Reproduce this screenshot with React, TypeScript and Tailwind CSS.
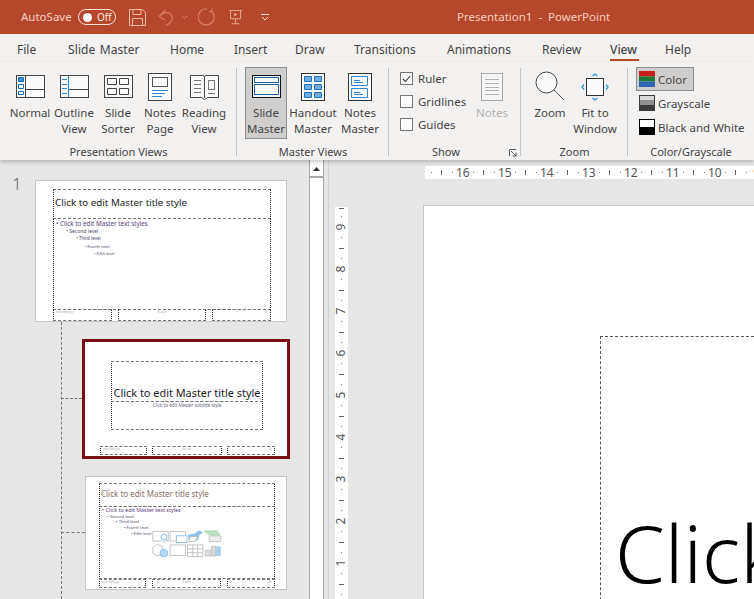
import type { ReactNode } from "react";

const tabs = [
  { label: "File", cls: "ml-[17px] w-[51px]" },
  { label: "Slide Master", cls: "w-[102px] [word-spacing:1px] tracking-[0.1px]" },
  { label: "Home", cls: "w-[64px]" },
  { label: "Insert", cls: "w-[61px]" },
  { label: "Draw", cls: "w-[59px]" },
  { label: "Transitions", cls: "w-[93px]" },
  { label: "Animations", cls: "w-[95px]" },
  { label: "Review", cls: "w-[68px]" },
  { label: "View", cls: "w-[55px]" },
  { label: "Help", cls: "w-[40px]" },
];

const Normal = () => (
  <svg width="29" height="23" viewBox="0 0 29 23" fill="none">
    <rect x="0.5" y="0.5" width="28" height="22" fill="#fafafa" stroke="#444" />
    <path d="M9.5 1v21M10 14.5h18" stroke="#444" />
    <path d="M2.5 2.5h5v4h-5z" fill="#3a8fd8" stroke="#106ebe" />
    <path d="M2.5 9.5h5v4h-5zM2.5 16.5h5v3h-5z" fill="#fff" stroke="#106ebe" />
  </svg>
);

const Outline = () => (
  <svg width="29" height="23" viewBox="0 0 29 23" fill="none">
    <rect x="0.5" y="0.5" width="28" height="22" fill="#fafafa" stroke="#444" />
    <path d="M8.5 1v21" stroke="#2b88d8" />
    <path d="M9 14.5h19" stroke="#444" />
    <path d="M2 4.5h5M2 9.5h5M2 13.5h5M2 18.5h5" stroke="#2b88d8" />
  </svg>
);

const Sorter = () => (
  <svg width="29" height="23" viewBox="0 0 29 23" fill="none">
    <rect x="0.5" y="0.5" width="28" height="22" fill="#fafafa" stroke="#444" />
    <path d="M3.5 3.5h9v6h-9zM15.5 3.5h9v6h-9zM3.5 13.5h9v6h-9zM15.5 13.5h9v6h-9z" stroke="#444" />
  </svg>
);

const NotesPage = () => (
  <svg width="24" height="28" viewBox="0 0 24 28" fill="none">
    <rect x="0.5" y="0.5" width="23" height="27" fill="#fafafa" stroke="#444" />
    <rect x="4.5" y="4.5" width="15" height="9" stroke="#555" />
    <path d="M4 17.5h16M4 20.5h13M4 23.5h10" stroke="#2b88d8" />
  </svg>
);

const Reading = () => (
  <svg width="29" height="27" viewBox="0 0 29 27" fill="none">
    <path d="M0.5 2.5h13l1 1.5 1-1.5h13v22h-11l-3 2-3-2h-11z" fill="#fafafa" stroke="#444" />
    <path d="M14.5 4v21" stroke="#444" />
    <path d="M4 7.5h7M4 11.5h7M4 15.5h7M4 19.5h7" stroke="#777" />
    <rect x="18.5" y="7.5" width="6" height="9" stroke="#777" />
    <path d="M18 20.5h7" stroke="#777" />
  </svg>
);

const SlideMasterIcon = () => (
  <svg width="29" height="23" viewBox="0 0 29 23" fill="none">
    <rect x="0.5" y="0.5" width="28" height="22" fill="#f4f6f7" stroke="#111" />
    <rect x="2.5" y="2.5" width="24" height="5" stroke="#1f63ad" />
    <rect x="2.5" y="9.5" width="24" height="10" stroke="#1f63ad" />
  </svg>
);

const HandoutIcon = () => (
  <svg width="24" height="28" viewBox="0 0 24 28" fill="none">
    <rect x="0.5" y="0.5" width="23" height="27" fill="#fafafa" stroke="#333" />
    <path d="M3.5 3.5h7v5h-7zM13.5 3.5h7v5h-7zM3.5 11.5h7v5h-7zM13.5 11.5h7v5h-7zM3.5 19.5h7v5h-7zM13.5 19.5h7v5h-7z" fill="#70aee3" stroke="#1f6fb8" />
  </svg>
);

const NotesMasterIcon = () => (
  <svg width="24" height="28" viewBox="0 0 24 28" fill="none">
    <rect x="0.5" y="0.5" width="23" height="27" fill="#fafafa" stroke="#333" />
    <path d="M3.5 3.5h16v9h-16zM3.5 15.5h16v9h-16z" stroke="#2b88d8" />
    <path d="M6 7.5h6M6 9.5h9M6 19.5h6M6 21.5h9" stroke="#2b88d8" />
  </svg>
);

const NotesIcon = () => (
  <svg width="22" height="28" viewBox="0 0 22 28" fill="none">
    <rect x="0.5" y="0.5" width="21" height="27" fill="#f6f6f6" stroke="#a8a8a8" />
    <path d="M4 6.5h14M4 10.5h14M4 14.5h14M4 17.5h14M4 21.5h14" stroke="#b4b4b4" />
  </svg>
);

const ZoomIcon = () => (
  <svg width="31" height="31" viewBox="0 0 31 31" fill="none">
    <circle cx="11.5" cy="11.5" r="10.5" fill="#fafafa" stroke="#444" />
    <path d="M19 19l10 10" stroke="#555" />
  </svg>
);

const FitIcon = () => (
  <svg width="28" height="28" viewBox="0 0 28 28" fill="none">
    <rect x="5.5" y="5.5" width="17" height="17" fill="#fafafa" stroke="#333" />
    <path d="M11.5 3l2.5-2 2.5 2M11.5 25l2.5 2 2.5-2M3 11.5l-2 2.5 2 2.5M25 11.5l2 2.5-2 2.5" stroke="#2b9be0" strokeWidth="1.3" />
  </svg>
);

const ColorSwatch = () => (
  <svg width="16" height="16" viewBox="0 0 16 16">
    <rect width="16" height="5.5" fill="#c5211b" />
    <rect y="5.5" width="16" height="5" fill="#1d7a35" />
    <rect y="10.5" width="16" height="5.5" fill="#2b65b4" />
  </svg>
);

const GraySwatch = () => (
  <svg width="16" height="16" viewBox="0 0 16 16">
    <rect width="16" height="16" fill="#3c3c3c" />
    <rect x="1" y="1" width="14" height="4" fill="#d8d8d8" />
    <rect x="1" y="5" width="14" height="5" fill="#909090" />
  </svg>
);

const BwSwatch = () => (
  <svg width="16" height="16" viewBox="0 0 16 16">
    <rect width="16" height="16" fill="#000" />
    <rect x="1" y="1" width="14" height="7" fill="#fff" />
  </svg>
);

function RibbonButton({ icon, lines, w, active, disabled }: { icon: ReactNode; lines: string[]; w: string; active?: boolean; disabled?: boolean }) {
  return (
    <div className={`${w} h-[72px] flex flex-col items-center shrink-0 border ${active ? "bg-[#cfcecc] border-[#8e8e8e]" : "border-transparent"} ${disabled ? "text-[#b0b0b0]" : "text-[#444]"}`}>
      <div className="h-[37px] flex items-center justify-center shrink-0">{icon}</div>
      {lines.map((l) => (
        <div key={l} className="h-[16px] leading-[16px] whitespace-nowrap">{l}</div>
      ))}
    </div>
  );
}

function Group({ w, label, children, launcher, last }: { w: string; label: string; children: ReactNode; launcher?: boolean; last?: boolean }) {
  return (
    <div className={`${w} relative shrink-0 flex flex-col`}>
      <div className="flex h-[83px] pt-[5px]">{children}</div>
      <div className={`text-center text-[11px] leading-[14px] text-[#444] whitespace-nowrap ${launcher ? "pr-[18px]" : ""}`}>{label}</div>
      {!last && <div className="absolute right-0 top-[6px] h-[88px] w-px bg-[#c6c6c6]" />}
      {launcher && (
        <svg className="absolute right-[4px] top-[87px]" width="8" height="8" viewBox="0 0 8 8" fill="none">
          <path d="M0.5 7V0.5H7M2 2l5 5M7 3.5V7H3.5" stroke="#555" />
        </svg>
      )}
    </div>
  );
}

function Check({ label, checked }: { label: string; checked?: boolean }) {
  return (
    <div className="h-[23px] flex items-center gap-[5px] text-[#444] whitespace-nowrap">
      <div className="w-[13px] h-[13px] border border-[#777] bg-[#fbfbfb] flex items-center justify-center">
        {checked && (
          <svg width="9" height="8" viewBox="0 0 9 8" fill="none">
            <path d="M1 4l2.5 2.5L8 1" stroke="#333" strokeWidth="1.1" />
          </svg>
        )}
      </div>
      {label}
    </div>
  );
}

function ColorRow({ swatch, label, active }: { swatch: ReactNode; label: string; active?: boolean }) {
  return (
    <div className={`h-[24px] flex items-center gap-[3px] pl-[2px] pr-[1px] border whitespace-nowrap text-[#444] ${active ? "bg-[#cfcecc] border-[#8e8e8e] w-[58px]" : "border-transparent"}`}>
      {swatch}
      <span className="pt-[1px]">{label}</span>
    </div>
  );
}

// dashed placeholder boxes on the thumbnails
function Ph({ cls, children }: { cls: string; children?: ReactNode }) {
  return <div className={`absolute border border-dashed border-y-[#777] border-x-[#222] [border-inline-style:dotted] ${cls}`}>{children}</div>;
}

function Footers({ top, h, a, b, c }: { top: string; h: string; a: string; b: string; c: string }) {
  return (
    <>
      <Ph cls={`${top} ${h} ${a}`}><div className="text-[3px] leading-[5px] pl-[2px] text-[#aaa]">mm/dd/yyyy</div></Ph>
      <Ph cls={`${top} ${h} ${b}`}><div className="text-[3px] leading-[5px] text-center text-[#aaa]">Footer</div></Ph>
      <Ph cls={`${top} ${h} ${c}`}><div className="text-[3px] leading-[5px] text-right pr-[2px] text-[#aaa]">‹#›</div></Ph>
    </>
  );
}

const bigLevels = [
  { text: "Second level", cls: "pl-[10px] text-[5px]" },
  { text: "Third level", cls: "pl-[20px] text-[4.5px]" },
  { text: "Fourth level", cls: "pl-[29px] text-[4px]" },
  { text: "Fifth level", cls: "pl-[38px] text-[4px]" },
];

const smallLevels = [
  { text: "Second level", cls: "pl-[5px] text-[4.2px]" },
  { text: "Third level", cls: "pl-[14px] text-[4.2px]" },
  { text: "Fourth level", cls: "pl-[22px] text-[4px]" },
  { text: "Fifth level", cls: "pl-[29px] text-[4px]" },
];

function BodyLevels({ lh, first, levels }: { lh: string; first: string; levels: { text: string; cls: string }[] }) {
  return (
    <div className="pl-[2px] pt-[1px] text-[#4a4a6a] whitespace-nowrap">
      <div className={`${first} text-[#5a3f78] ${lh}`}>• Click to edit Master text styles</div>
      {levels.map((l) => (
        <div key={l.text} className={`${l.cls} ${lh}`}>• {l.text}</div>
      ))}
    </div>
  );
}

const ContentIcons = () => (
  <svg className="absolute left-[51px] top-[23px]" width="72" height="27" viewBox="0 0 74 28" fill="none">
    <g stroke="#c4c4c4">
      <path d="M1.5 1.5h16v10h-16zM19.5 1.5h16v10h-16zM1.5 18l5-3 5 2v8l-5 2-5-3z" />
      <path d="M19.5 15.5h16v11h-16zM37.5 15.5h16v12h-16zM37.5 19.5h16M37.5 23.5h16M43 15.5v12M48 15.5v12" />
      <path d="M56 21h6v6h-6zM62.5 17h4v10h-4z" fill="#dcdcdc" />
    </g>
    <circle cx="13" cy="7" r="3" stroke="#8cc0ea" />
    <path d="M15 9l3 3" stroke="#8cc0ea" />
    <rect x="26" y="6" width="11" height="7" stroke="#8cc0ea" fill="#fff" />
    <circle cx="13" cy="24" r="4" fill="#b4d7f3" stroke="#8cc0ea" />
    <path d="M38 6c1-3 6-1 8-3 2-3 6-3 7 0l-3 2-2 6-9 1z" fill="#8cc0ea" />
    <path d="M40 7h8l-3 5h-6z" fill="#fff" stroke="#bbb" />
    <path d="M55 1h13l3 4H60z" fill="#bfe3c3" stroke="#a3d4a8" />
    <path d="M60 6h12v6H60z" fill="#eee" stroke="#c4c4c4" />
    <rect x="67" y="17" width="5" height="10" fill="#a9d0f0" />
  </svg>
);

export default function App() {
  return (
    <div className="w-[754px] h-[599px] overflow-hidden flex flex-col bg-[#e6e6e6] font-['Noto_Sans',sans-serif] text-[11.5px]">
      {/* title bar */}
      <div className="h-[34px] shrink-0 bg-[#b7472a] flex items-center">
        <span className="ml-[21px] w-[57px] text-[#f4cfc2] text-[11.5px]">AutoSave</span>
        <div className="w-[38px] h-[16px] rounded-full border border-[#fbe5dd] flex items-center pl-[4px] gap-[5px]">
          <div className="w-[9px] h-[9px] rounded-full bg-white" />
          <span className="text-[10px] leading-none text-[#fbe5dd]">Off</span>
        </div>
        <svg className="ml-[13px]" width="17" height="17" viewBox="0 0 17 17" fill="none" stroke="#f0bba9">
          <path d="M0.5 0.5h13l3 3v13H0.5z" />
          <path d="M4 0.5v5h8v-5M3.5 16.5v-7h10v7" />
        </svg>
        <svg className="ml-[12px]" width="16" height="17" viewBox="0 0 16 17" fill="none" stroke="#d97c62" strokeWidth="1.2">
          <path d="M1 7.5L7.5 1M1 7.5l6 3.5M1 7.5C5 3.5 10 2.5 12.5 5c3 3 2.5 8-4.5 11.5" />
        </svg>
        <svg className="ml-[7px]" width="7" height="5" viewBox="0 0 7 5" fill="none" stroke="#d97c62">
          <path d="M0.5 0.5l3 3 3-3" />
        </svg>
        <svg className="ml-[10px]" width="18" height="18" viewBox="0 0 18 18" fill="none" stroke="#d97c62" strokeWidth="1.2">
          <path d="M14 3.5A8 8 0 1 1 9 1M14 3.5V.5M14 3.5h-3" />
        </svg>
        <svg className="ml-[12px]" width="16" height="15" viewBox="0 0 16 18" fill="none" stroke="#f0bba9">
          <path d="M0 .5h15M1.5 .5v10h12V.5M7.5 11v5M3 16.5h9" />
          <path d="M6 3.5l3.5 2-3.5 2z" fill="#f0bba9" stroke="none" />
        </svg>
        <svg className="ml-[17px]" width="8" height="7" viewBox="0 0 8 7" fill="none" stroke="#f7d6ca">
          <path d="M0 .5h8M1 3l3 3 3-3" />
        </svg>
        <span className="ml-[188px] text-[#f6cdbd] text-[11.5px] whitespace-pre">Presentation1  -  PowerPoint</span>
      </div>

      {/* tabs */}
      <div className="h-[28px] shrink-0 bg-[#f3f2f1] flex items-center text-[#444] text-[12px] pt-[4px]">
        {tabs.map((t) => (
          <div key={t.label} className={`${t.cls} shrink-0 whitespace-nowrap relative ${t.label === "View" ? "font-medium" : ""}`}>
            {t.label}
            {t.label === "View" && <div className="absolute left-0 top-[18px] w-[29px] h-[2px] bg-[#b7472a]" />}
          </div>
        ))}
      </div>

      {/* ribbon */}
      <div className="h-[98px] shrink-0 bg-[#f3f2f1] flex relative z-10 shadow-[0_2px_4px_rgba(0,0,0,0.22)]">
        <Group w="w-[237px]" label="Presentation Views">
          <div className="pl-[8px] flex">
            <RibbonButton w="w-[44px]" icon={<Normal />} lines={["Normal"]} />
            <RibbonButton w="w-[44px]" icon={<Outline />} lines={["Outline", "View"]} />
            <RibbonButton w="w-[44px]" icon={<Sorter />} lines={["Slide", "Sorter"]} />
            <RibbonButton w="w-[40px]" icon={<NotesPage />} lines={["Notes", "Page"]} />
            <RibbonButton w="w-[48px]" icon={<Reading />} lines={["Reading", "View"]} />
          </div>
        </Group>
        <Group w="w-[152px]" label="Master Views">
          <div className="pl-[8px] flex">
            <RibbonButton w="w-[42px]" active icon={<SlideMasterIcon />} lines={["Slide", "Master"]} />
            <RibbonButton w="w-[52px]" icon={<HandoutIcon />} lines={["Handout", "Master"]} />
            <RibbonButton w="w-[42px]" icon={<NotesMasterIcon />} lines={["Notes", "Master"]} />
          </div>
        </Group>
        <Group w="w-[132px]" label="Show" launcher>
          <div className="pl-[11px] w-[80px] flex flex-col shrink-0">
            <Check label="Ruler" checked />
            <Check label="Gridlines" />
            <Check label="Guides" />
          </div>
          <RibbonButton w="w-[46px]" disabled icon={<NotesIcon />} lines={["Notes"]} />
        </Group>
        <Group w="w-[107px]" label="Zoom">
          <div className="pl-[7px] flex">
            <RibbonButton w="w-[44px]" icon={<ZoomIcon />} lines={["Zoom"]} />
            <RibbonButton w="w-[46px]" icon={<FitIcon />} lines={["Fit to", "Window"]} />
          </div>
        </Group>
        <Group w="w-[126px]" label="Color/Grayscale" last>
          <div className="pl-[8px] flex flex-col">
            <ColorRow active swatch={<ColorSwatch />} label="Color" />
            <ColorRow swatch={<GraySwatch />} label="Grayscale" />
            <ColorRow swatch={<BwSwatch />} label="Black and White" />
          </div>
        </Group>
      </div>

      <div className="flex-1 min-h-0 flex">
        {/* thumbnail pane */}
        <div className="w-[309px] shrink-0 relative flex flex-col">
          <div className="absolute left-[12px] top-[13px] text-[17px] leading-[22px] font-light text-[#666]">1</div>
          {/* connector lines */}
          <div className="absolute left-[61px] top-[162px] bottom-0 border-l border-dashed border-[#777]" />
          <div className="absolute left-[61px] top-[238px] w-[21px] border-t border-dashed border-[#777]" />
          <div className="absolute left-[61px] top-[372px] w-[24px] border-t border-dashed border-[#777]" />

          <div className="mt-[20px] ml-[35px] w-[252px] h-[142px] shrink-0 bg-white border border-[#c6c6c6] relative">
            <Ph cls="left-[17px] top-[8px] w-[218px] h-[30px]">
              <div className="pl-[1px] pt-[5px] text-[9.8px] leading-[15px] text-[#1c1c2a] whitespace-nowrap">Click to edit Master title style</div>
            </Ph>
            <Ph cls="left-[17px] top-[37px] w-[218px] h-[92px]">
              <BodyLevels lh="leading-[7.5px]" first="text-[6.3px]" levels={bigLevels} />
            </Ph>
            <Footers top="top-[128px]" h="h-[12px]" a="left-[17px] w-[59px]" b="left-[82px] w-[88px]" c="left-[176px] w-[59px]" />
          </div>

          <div className="relative z-[1] mt-[17px] ml-[82px] w-[208px] h-[120px] shrink-0 bg-white border-[3px] border-[#790d14]">
            <Ph cls="left-[26px] top-[19px] w-[152px] h-[41px]">
              <div className="absolute left-0 right-0 bottom-[1px] text-center text-[10.9px] leading-[15px] text-[#1c1c2a] whitespace-nowrap">Click to edit Master title style</div>
            </Ph>
            <Ph cls="left-[26px] top-[59px] w-[152px] h-[29px]">
              <div className="text-center text-[4.5px] leading-[6px] text-[#666680] whitespace-nowrap">Click to edit Master subtitle style</div>
            </Ph>
            <Footers top="top-[104px]" h="h-[9px]" a="left-[15px] w-[47px]" b="left-[67px] w-[70px]" c="left-[142px] w-[48px]" />
          </div>

          <div className="mt-[17px] ml-[85px] w-[202px] h-[114px] shrink-0 bg-white border border-[#c6c6c6] relative">
            <Ph cls="left-[13px] top-[6px] w-[176px] h-[24px]">
              <div className="pl-[1px] pt-[3px] text-[8px] leading-[14px] text-[#8a7268] whitespace-nowrap">Click to edit Master title style</div>
            </Ph>
            <Ph cls="left-[13px] top-[29px] w-[176px] h-[73px]">
              <BodyLevels lh="leading-[5.7px]" first="text-[5.4px]" levels={smallLevels} />
              <ContentIcons />
            </Ph>
            <Footers top="top-[102px]" h="h-[9px]" a="left-[13px] w-[47px]" b="left-[66px] w-[69px]" c="left-[141px] w-[48px]" />
          </div>
        </div>

        {/* scrollbar */}
        <div className="w-[15px] shrink-0 bg-white border-x border-[#a8a8a8] flex flex-col">
          <div className="h-[18px] border-b-2 border-[#a8a8a8] flex items-center justify-center pt-[2px]">
            <svg width="7" height="4" viewBox="0 0 7 4"><path d="M0 4l3.5-4L7 4z" fill="#333" /></svg>
          </div>
        </div>
        <div className="w-[5px] shrink-0 border-r border-[#d2d2d2]" />

        {/* editing area */}
        <div className="flex-1 min-w-0 flex flex-col overflow-hidden">
          <div className="mt-[6px] ml-[96px] h-[13px] shrink-0 bg-white flex pl-[3.75px] text-[#555] text-[12px] leading-[13px]">
            {[16, 15, 14, 13, 12, 11, 10, 9].map((n) => (
              <div key={n} className="flex shrink-0">
                <div className="w-[5px] flex items-center justify-center"><div className="w-px h-px bg-[#777]" /></div>
                <div className="w-[16px] flex items-center justify-center"><div className="w-px h-[5px] bg-[#666]" /></div>
                <div className="w-[5px] flex items-center justify-center"><div className="w-px h-px bg-[#777]" /></div>
                <div className="w-[16px] flex items-center justify-center">{n}</div>
              </div>
            ))}
          </div>
          <div className="mt-[26px] flex-1 min-h-0 flex">
            <div className="ml-[6px] mt-[2px] w-[13px] shrink-0 bg-white flex flex-col text-[#555] text-[12px]">
              <div className="h-[7px] flex justify-center pt-[1px]"><div className="h-px w-[5px] bg-[#666]" /></div>
              <div className="h-[5px] flex items-center justify-center"><div className="h-px w-px bg-[#777]" /></div>
              {[9, 8, 7, 6, 5, 4, 3, 2, 1].map((n) => (
                <div key={n} className="flex flex-col shrink-0">
                  <div className="h-[16px] flex items-center justify-center"><span className="-rotate-90 leading-none">{n}</span></div>
                  <div className="h-[5px] flex items-center justify-center"><div className="h-px w-px bg-[#777]" /></div>
                  <div className="h-[16px] flex items-center justify-center"><div className="h-px w-[5px] bg-[#666]" /></div>
                  <div className="h-[5px] flex items-center justify-center"><div className="h-px w-px bg-[#777]" /></div>
                </div>
              ))}
            </div>
            <div className="ml-[75px] flex-1 bg-white border-l border-t border-[#c6c6c6] relative overflow-hidden">
              <div className="absolute left-[176px] top-[130px] w-[300px] h-[400px] border-l border-t border-dashed border-[#555]" />
              <div className="absolute left-[191px] top-[296px] text-[80px] leading-[100px] font-light text-black whitespace-nowrap">Click to edit</div>
            </div>
          </div>
        </div>
      </div>
    </div>
  );
}
